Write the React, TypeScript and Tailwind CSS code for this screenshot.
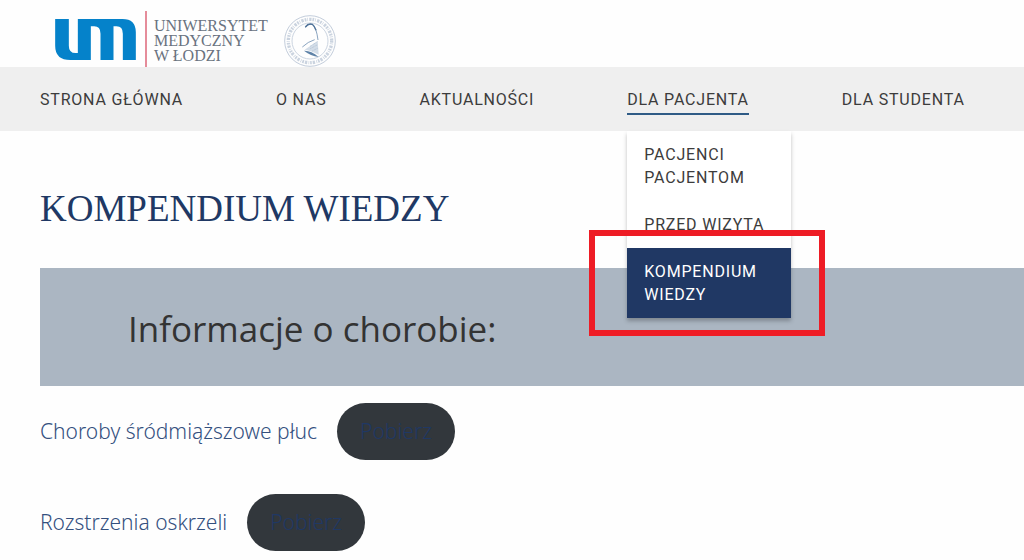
const navItems = [
  { label: 'STRONA GŁÓWNA', href: '#start' },
  { label: 'O NAS', href: '#o-nas' },
  { label: 'AKTUALNOŚCI', href: '#aktualnosci' },
  { label: 'DLA PACJENTA', href: '#dla-pacjenta', active: true },
  { label: 'DLA STUDENTA', href: '#dla-studenta' },
];

const downloads = [
  { title: 'Choroby śródmiąższowe płuc', href: '#choroby' },
  { title: 'Rozstrzenia oskrzeli', href: '#rozstrzenia' },
];

function UmLogo() {
  return (
    <svg viewBox="46 58 242 123" className="mt-2 h-[41px] w-[81px]" aria-hidden="true">
      <path
        fill="#0582ca"
        d="M46 58H87V138Q87 160 107 160H114V58H248Q288 58 288 98V181H249V102Q249 80 230 80H221V181H182V102Q182 80 163 80H153V181H92Q46 181 46 138Z"
      />
    </svg>
  );
}

function Seal() {
  return (
    <svg viewBox="0 0 156 156" className="mt-1 h-[52px] w-[52px]" fill="none" aria-hidden="true">
      <circle cx="78" cy="78" r="76" stroke="#c3cddb" strokeWidth="3" />
      <circle cx="78" cy="78" r="65" stroke="#b3c0d2" strokeWidth="10" strokeDasharray="5 3 2 4 7 3" opacity="0.7" />
      <circle cx="78" cy="78" r="54" stroke="#ccd5e1" strokeWidth="3" />
      <path d="M64 38Q73 24 85 28Q97 36 102 75" stroke="#8aa4c0" strokeWidth="3" />
      <path d="M64 36Q73 24 85 28Q92 34 96 46" stroke="#4f7299" strokeWidth="4" />
      <path d="M55 96Q72 80 92 74" stroke="#8aa4c0" strokeWidth="3" />
      <path d="M62 104L101 78L104 119Q78 105 62 104Z" fill="#d3dde8" />
      <path d="M78 94L100 80M79 101L101 89M85 108L102 99" stroke="#a5b8cd" strokeWidth="2" strokeDasharray="3 2" />
      <path d="M60 107Q81 106 104 126Q80 123 60 107Z" fill="#5f83a8" />
    </svg>
  );
}

function SubMenu() {
  const link = 'block py-3 pr-3 pl-[17px]';
  return (
    <ul className="absolute top-[43px] left-0 z-10 w-[164px] bg-white leading-[23px] whitespace-normal shadow-[0_3px_4px_rgba(0,0,0,0.25)]">
      <li>
        <a href="#pacjenci" className={link}>PACJENCI PACJENTOM</a>
      </li>
      <li>
        <a href="#przed-wizyta" className={link}>PRZED WIZYTĄ</a>
      </li>
      <li className="relative bg-[#203864] text-white">
        <a href="#kompendium" className={link}>KOMPENDIUM WIEDZY</a>
        <span className="pointer-events-none absolute -top-[18px] -right-[34px] -bottom-[18px] -left-[38px] border-6 border-[#ee1c25]" />
      </li>
    </ul>
  );
}

export default function App() {
  return (
    <div className="min-h-screen overflow-x-hidden bg-[#fefefe] font-['Roboto',sans-serif]">
      <header>
        <a href="#start" className="flex h-[67px] items-start pt-[11px] pl-[55px]">
          <UmLogo />
          <span className="ml-[9px] h-14 w-[2px] bg-[#e58c9a]" />
          <span className="mt-[7px] ml-[7px] flex flex-col font-['Liberation_Serif',serif] text-[16px] leading-[15px] text-[#69727f]">
            <span>UNIWERSYTET</span>
            <span>MEDYCZNY</span>
            <span>W ŁODZI</span>
          </span>
          <span className="ml-4">
            <Seal />
          </span>
        </a>
        <nav className="bg-[#efefef] px-10 pt-[21px] pb-4 text-[16px] leading-6 tracking-wider text-[#3c3c3c]">
          <ul className="flex gap-[93px] whitespace-nowrap">
            {navItems.map((item) => (
              <li key={item.label} className="relative">
                <a
                  href={item.href}
                  className={
                    item.active
                      ? 'block border-b-2 border-[#2f5b86] pb-px'
                      : 'block border-b-2 border-transparent pb-px'
                  }
                >
                  {item.label}
                </a>
                {item.active && <SubMenu />}
              </li>
            ))}
          </ul>
        </nav>
      </header>
      <main className="pt-[54px] pl-10">
        <h1 className="font-['Liberation_Serif',serif] text-[37px] leading-[48px] text-[#203864]">
          KOMPENDIUM WIEDZY
        </h1>
        <section className="mt-[35px] bg-[#abb6c2] pt-[34px] pb-[30px] pl-[88px]">
          <h2 className="font-['Open_Sans',sans-serif] text-[35px] leading-[54px] text-[#333333]">
            Informacje o chorobie:
          </h2>
        </section>
        <ul className="mt-[17px] flex flex-col gap-[34px] pb-2 font-['Noto_Sans',sans-serif] text-[21px] leading-[57px] font-light text-[#203864]">
          {downloads.map((item) => (
            <li key={item.title} className="flex gap-5">
              <span className="text-[#34507e]">{item.title}</span>
              <a href={item.href} className="rounded-full bg-[#32373c] px-[23px]">
                Pobierz
              </a>
            </li>
          ))}
        </ul>
      </main>
    </div>
  );
}
